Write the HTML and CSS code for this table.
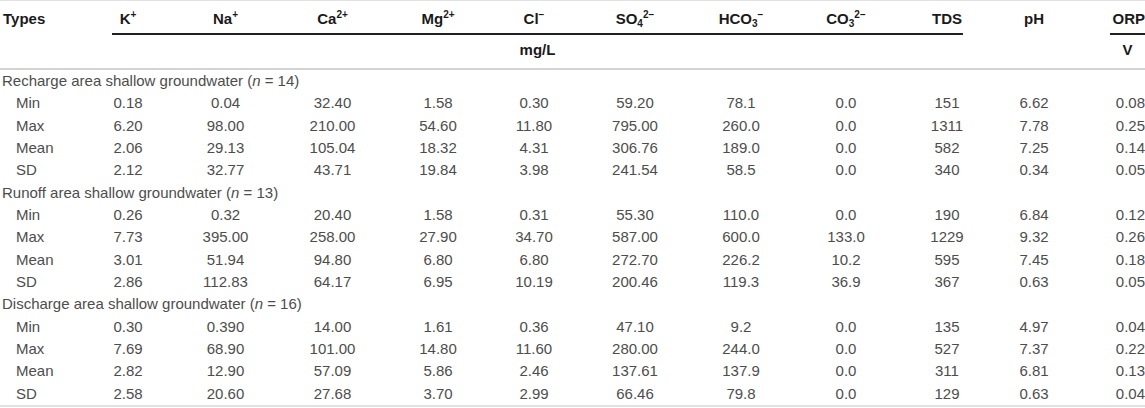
FILE: index.html
```html
<!DOCTYPE html>
<html lang="en">
<head>
    <meta charset="UTF-8">
    <meta name="viewport" content="width=device-width, initial-scale=1.0">
    <title>Hydrochemistry of shallow groundwater</title>
    <link rel="stylesheet" href="styles.css">
</head>
<body>
    <table class="chem">
        <colgroup>
            <col class="c-type"><col class="c-k"><col class="c-na"><col class="c-ca"><col class="c-mg"><col class="c-cl">
            <col class="c-so4"><col class="c-hco3"><col class="c-co3"><col class="c-tds"><col class="c-ph"><col class="c-orp">
        </colgroup>
        <thead>
            <tr class="head-ions">
                <th class="types" rowspan="2">Types</th>
                <th>K<sup>+</sup></th>
                <th>Na<sup>+</sup></th>
                <th>Ca<sup>2+</sup></th>
                <th>Mg<sup>2+</sup></th>
                <th>Cl<sup>−</sup></th>
                <th>SO<sub>4</sub><sup>2−</sup></th>
                <th>HCO<sub>3</sub><sup>−</sup></th>
                <th>CO<sub>3</sub><sup>2−</sup></th>
                <th>TDS</th>
                <th class="ph" rowspan="2">pH</th>
                <th class="orp">ORP</th>
            </tr>
            <tr class="head-units">
                <th colspan="9"><div class="unit unit-main">mg/L</div></th>
                <th class="orp"><div class="unit unit-orp">V</div></th>
            </tr>
        </thead>
        <tbody>
            <tr class="group"><td colspan="12">Recharge area shallow groundwater (<i>n</i> = 14)</td></tr>
            <tr><td class="stat">Min</td><td>0.18</td><td>0.04</td><td>32.40</td><td>1.58</td><td>0.30</td><td>59.20</td><td>78.1</td><td>0.0</td><td>151</td><td>6.62</td><td class="orp">0.08</td></tr>
            <tr><td class="stat">Max</td><td>6.20</td><td>98.00</td><td>210.00</td><td>54.60</td><td>11.80</td><td>795.00</td><td>260.0</td><td>0.0</td><td>1311</td><td>7.78</td><td class="orp">0.25</td></tr>
            <tr><td class="stat">Mean</td><td>2.06</td><td>29.13</td><td>105.04</td><td>18.32</td><td>4.31</td><td>306.76</td><td>189.0</td><td>0.0</td><td>582</td><td>7.25</td><td class="orp">0.14</td></tr>
            <tr><td class="stat">SD</td><td>2.12</td><td>32.77</td><td>43.71</td><td>19.84</td><td>3.98</td><td>241.54</td><td>58.5</td><td>0.0</td><td>340</td><td>0.34</td><td class="orp">0.05</td></tr>
            <tr class="group"><td colspan="12">Runoff area shallow groundwater (<i>n</i> = 13)</td></tr>
            <tr><td class="stat">Min</td><td>0.26</td><td>0.32</td><td>20.40</td><td>1.58</td><td>0.31</td><td>55.30</td><td>110.0</td><td>0.0</td><td>190</td><td>6.84</td><td class="orp">0.12</td></tr>
            <tr><td class="stat">Max</td><td>7.73</td><td>395.00</td><td>258.00</td><td>27.90</td><td>34.70</td><td>587.00</td><td>600.0</td><td>133.0</td><td>1229</td><td>9.32</td><td class="orp">0.26</td></tr>
            <tr><td class="stat">Mean</td><td>3.01</td><td>51.94</td><td>94.80</td><td>6.80</td><td>6.80</td><td>272.70</td><td>226.2</td><td>10.2</td><td>595</td><td>7.45</td><td class="orp">0.18</td></tr>
            <tr><td class="stat">SD</td><td>2.86</td><td>112.83</td><td>64.17</td><td>6.95</td><td>10.19</td><td>200.46</td><td>119.3</td><td>36.9</td><td>367</td><td>0.63</td><td class="orp">0.05</td></tr>
            <tr class="group"><td colspan="12">Discharge area shallow groundwater (<i>n</i> = 16)</td></tr>
            <tr><td class="stat">Min</td><td>0.30</td><td>0.390</td><td>14.00</td><td>1.61</td><td>0.36</td><td>47.10</td><td>9.2</td><td>0.0</td><td>135</td><td>4.97</td><td class="orp">0.04</td></tr>
            <tr><td class="stat">Max</td><td>7.69</td><td>68.90</td><td>101.00</td><td>14.80</td><td>11.60</td><td>280.00</td><td>244.0</td><td>0.0</td><td>527</td><td>7.37</td><td class="orp">0.22</td></tr>
            <tr><td class="stat">Mean</td><td>2.82</td><td>12.90</td><td>57.09</td><td>5.86</td><td>2.46</td><td>137.61</td><td>137.9</td><td>0.0</td><td>311</td><td>6.81</td><td class="orp">0.13</td></tr>
            <tr><td class="stat">SD</td><td>2.58</td><td>20.60</td><td>27.68</td><td>3.70</td><td>2.99</td><td>66.46</td><td>79.8</td><td>0.0</td><td>129</td><td>0.63</td><td class="orp">0.04</td></tr>
        </tbody>
    </table>
</body>
</html>
```

FILE: styles.css
```css
* {
    margin: 0;
    padding: 0;
    box-sizing: border-box;
}
body {
    background: #fff;
    font-family: 'Liberation Sans', Arial, sans-serif;
    font-size: 15px;
    color: #4d4d4d;
}
.chem {
    width: 1145px;
    table-layout: fixed;
    border-collapse: collapse;
    border-top: 1px solid #e2e2e2;
    border-bottom: 2px solid #e2e2e2;
}
.c-type { width: 80px; }
.c-k { width: 96px; }
.c-na { width: 99px; }
.c-ca { width: 115px; }
.c-mg { width: 96px; }
.c-cl { width: 96px; }
.c-so4 { width: 106px; }
.c-hco3 { width: 106px; }
.c-co3 { width: 104px; }
.c-tds { width: 98px; }
.c-ph { width: 76px; }
.c-orp { width: 73px; }

/* header */
thead {
    border-bottom: 2px solid #d4d4d4;
}
th {
    font-size: 15px;
    font-weight: bold;
    color: #1a1a1a;
    line-height: 16px;
    text-align: center;
    white-space: nowrap;
}
.head-ions th {
    padding: 10px 0 6px;
    vertical-align: top;
}
.head-ions th.types {
    text-align: left;
    padding-left: 3px;
}
.head-units th {
    padding: 0 0 10px;
    vertical-align: top;
}
.unit {
    border-top: 2px solid #222;
    padding-top: 7px;
    text-align: center;
}
.unit-main {
    margin: 0 33px 0 32px;
}
.unit-orp {
    width: 35px;
    margin-left: auto;
}
th.orp, td.orp {
    text-align: right;
}
sup, sub {
    font-size: 10px;
    line-height: 0;
}
sup {
    vertical-align: 6px;
}
sub {
    vertical-align: -3px;
}

/* body */
td {
    line-height: 16px;
    padding: 3px 0 3.33px;
    text-align: center;
    white-space: nowrap;
}
td.stat {
    text-align: left;
    padding-left: 16px;
}
.group td {
    text-align: left;
    padding-left: 2px;
}
```
